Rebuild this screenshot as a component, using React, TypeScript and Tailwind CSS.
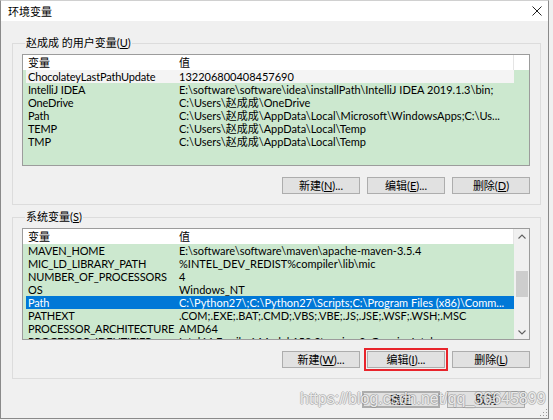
import React from "react";

const FONT = 'Lato, "Noto Sans CJK SC", sans-serif';

type Row = [string, string];

const userRows: Row[] = [
  ["ChocolateyLastPathUpdate", "132206800408457690"],
  ["IntelliJ IDEA", "E:\\software\\software\\idea\\installPath\\IntelliJ IDEA 2019.1.3\\bin;"],
  ["OneDrive", "C:\\Users\\赵成成\\OneDrive"],
  ["Path", "C:\\Users\\赵成成\\AppData\\Local\\Microsoft\\WindowsApps;C:\\Us..."],
  ["TEMP", "C:\\Users\\赵成成\\AppData\\Local\\Temp"],
  ["TMP", "C:\\Users\\赵成成\\AppData\\Local\\Temp"],
];

const sysRows: Row[] = [
  ["MAVEN_HOME", "E:\\software\\software\\maven\\apache-maven-3.5.4"],
  ["MIC_LD_LIBRARY_PATH", "%INTEL_DEV_REDIST%compiler\\lib\\mic"],
  ["NUMBER_OF_PROCESSORS", "4"],
  ["OS", "Windows_NT"],
  ["Path", "C:\\Python27\\;C:\\Python27\\Scripts;C:\\Program Files (x86)\\Comm..."],
  ["PATHEXT", ".COM;.EXE;.BAT;.CMD;.VBS;.VBE;.JS;.JSE;.WSF;.WSH;.MSC"],
  ["PROCESSOR_ARCHITECTURE", "AMD64"],
  ["PROCESSOR_IDENTIFIER", "Intel64 Family 6 Model 158 Stepping 9, GenuineIntel"],
];

function Btn({
  pre,
  key1,
  post,
  extra = "",
}: {
  pre: string;
  key1?: string;
  post?: string;
  extra?: string;
}) {
  return (
    <div
      className={`w-[78px] h-[17px] flex items-center justify-center bg-[#e1e1e1] border border-[#adadad] text-[11px] leading-none text-black ${extra}`}
    >
      <span>
        {pre}
        {key1 && <span className="underline">{key1}</span>}
        {post}
      </span>
    </div>
  );
}

function Chevron({ up }: { up: boolean }) {
  return (
    <svg width="8" height="5" viewBox="0 0 8 5">
      <path
        d={up ? "M0.5 4.5 L4 1 L7.5 4.5" : "M0.5 0.5 L4 4 L7.5 0.5"}
        fill="none"
        stroke="#606060"
        strokeWidth="1.1"
      />
    </svg>
  );
}

function List({
  rows,
  selected,
  focused,
  scroll,
}: {
  rows: Row[];
  selected?: number;
  focused?: number;
  scroll?: boolean;
}) {
  return (
    <div className="w-[508px] h-[112px] border border-[#9c9c9c] bg-[#cce8cf] flex overflow-hidden">
      <div className="w-[491px] flex flex-col">
        <div className="h-[15px] shrink-0 bg-white flex items-center text-[11px] leading-none border-r border-[#e5e5e5]">
          <div className="w-[152px] pl-[5px]">变量</div>
          <div className="pl-[4px]">值</div>
        </div>
        {rows.map((r, i) => {
          const sel = i === selected;
          const foc = i === focused;
          return (
            <div key={i} className="h-[13px] shrink-0 pl-[3px] flex">
              <div
                className={`flex-1 flex items-center text-[11px] leading-[13px] whitespace-nowrap overflow-hidden ${
                  sel ? "bg-[#0078d7] text-white" : foc ? "bg-[#f4f4f4] text-black" : "text-black"
                }`}
              >
                <div className="w-[149px] pl-[2px] shrink-0 tracking-[-0.15px]">{r[0]}</div>
                <div className="pl-[4px]">{r[1]}</div>
              </div>
            </div>
          );
        })}
      </div>
      {scroll ? (
        <div className="w-[15px] bg-[#f0f0f0] flex flex-col items-center">
          <div className="h-[14px] flex items-center justify-center">
            <Chevron up />
          </div>
          <div className="h-[28px]" />
          <div className="w-[12px] h-[26px] bg-[#cdcdcd]" />
          <div className="flex-1" />
          <div className="h-[14px] flex items-center justify-center">
            <Chevron up={false} />
          </div>
        </div>
      ) : (
        <div className="w-[15px] flex flex-col">
          <div className="h-[15px] bg-white" />
        </div>
      )}
    </div>
  );
}

export default function App() {
  return (
    <div
      className="w-[553px] h-[420px] bg-[#f0f0f0] relative overflow-hidden"
      style={{ fontFamily: FONT }}
    >
      <div className="w-[549px] h-[419px] border border-[#8a8a8a] border-t-[#d0d0d0] bg-[#f0f0f0] flex flex-col">
        {/* Title bar */}
        <div className="h-[20px] bg-white flex items-center justify-between pl-[7px] pr-[6px] shrink-0">
          <span className="text-[11px] text-black leading-none">环境变量</span>
          <svg width="10" height="10" viewBox="0 0 10 10">
            <path d="M0.5 0.5 L9.5 9.5 M9.5 0.5 L0.5 9.5" stroke="#222" strokeWidth="1" />
          </svg>
        </div>

        {/* User variables */}
        <fieldset className="ml-[11px] mt-[14px] w-[529px] border border-[#dcdcdc] pl-[9px] pt-[3px] pb-[10px]">
          <legend className="ml-[3px] px-[1px] text-[11px] leading-[16px] text-black">
            赵成成 的用户变量(<span className="underline">U</span>)
          </legend>
          <List rows={userRows} focused={0} />
          <div className="mt-[11px] flex justify-end gap-[7px] pr-[10px]">
            <Btn pre="新建(" key1="N" post=")..." />
            <Btn pre="编辑(" key1="E" post=")..." />
            <Btn pre="删除(" key1="D" post=")" />
          </div>
        </fieldset>

        {/* System variables */}
        <fieldset className="ml-[11px] mt-[4px] w-[529px] border border-[#dcdcdc] pl-[9px] pt-[3px] pb-[10px]">
          <legend className="ml-[3px] px-[1px] text-[11px] leading-[16px] text-black">
            系统变量(<span className="underline">S</span>)
          </legend>
          <List rows={sysRows} selected={4} scroll />
          <div className="mt-[11px] flex justify-end gap-[7px] pr-[10px]">
            <Btn pre="新建(" key1="W" post=")..." />
            <Btn pre="编辑(" key1="I" post=")..." extra="outline-2 outline-[#e8242b] outline-offset-[1px]" />
            <Btn pre="删除(" key1="L" post=")" />
          </div>
        </fieldset>

        {/* OK / Cancel */}
        <div className="mt-[12px] flex justify-end gap-[7px] pr-[23px]">
          <Btn pre="确定" extra="border-2 border-[#0078d7]" />
          <Btn pre="取消" />
        </div>
      </div>

      {/* watermark */}
      <div
        className="absolute left-[300px] top-[391px] text-[16px] leading-none whitespace-nowrap pointer-events-none"
        style={{
          fontFamily: '"Liberation Sans", Arial, sans-serif',
          color: "rgba(255,255,255,0.8)",
          textShadow:
            "1px 0 0 rgba(110,110,110,0.35), -1px 0 0 rgba(110,110,110,0.35), 0 1px 0 rgba(110,110,110,0.35), 0 -1px 0 rgba(110,110,110,0.35)",
        }}
      >
        https://blog.csdn.net/qq_36645899
      </div>

      {/* resize grip */}
      <svg className="absolute left-[540px] top-[409px]" width="8" height="8" viewBox="0 0 8 8">
        <rect x="6" y="0" width="1" height="1" fill="#999" />
        <rect x="3" y="3" width="1" height="1" fill="#999" />
        <rect x="6" y="3" width="1" height="1" fill="#999" />
        <rect x="0" y="6" width="1" height="1" fill="#999" />
        <rect x="3" y="6" width="1" height="1" fill="#999" />
        <rect x="6" y="6" width="1" height="1" fill="#999" />
      </svg>
    </div>
  );
}
